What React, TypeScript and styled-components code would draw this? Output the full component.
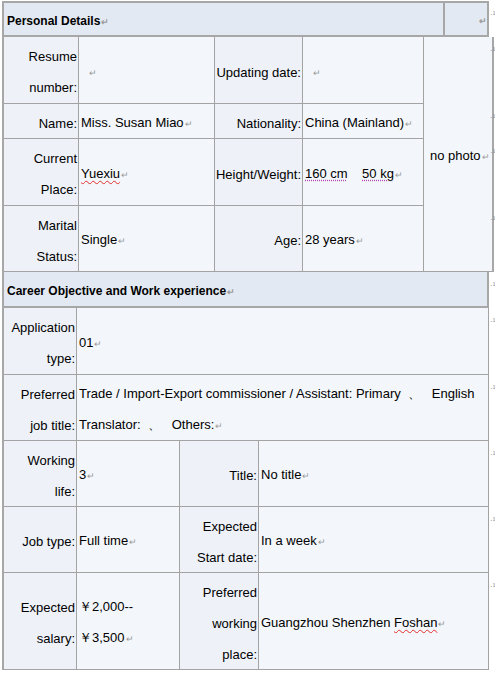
import React from "react";
import styled, { createGlobalStyle } from "styled-components";

const GlobalStyle = createGlobalStyle`
  html, body {
    margin: 0;
    padding: 0;
    background: #ffffff;
  }
  body {
    font-family: "Liberation Sans", Arial, sans-serif;
    font-size: 13px;
    color: #000;
  }
`;

const Page = styled.div`
  display: flex;
  padding: 1px 0 0 2px;
`;

const Table = styled.div`
  width: 487px;
  display: flex;
  flex-direction: column;
  border-left: 2px solid #a7a7a7;
  border-top: 2px solid #a7a7a7;
  box-sizing: border-box;
`;

const HeaderRow = styled.div<{ $cols: string; $h: number }>`
  display: grid;
  grid-template-columns: ${(p) => p.$cols};
  height: ${(p) => p.$h}px;
`;

const Section = styled.div<{ $cols: string; $rows: string }>`
  display: grid;
  grid-template-columns: ${(p) => p.$cols};
  grid-template-rows: ${(p) => p.$rows};
`;

const HeadCell = styled.div<{ $end?: boolean }>`
  display: flex;
  align-items: center;
  justify-content: ${(p) => (p.$end ? "flex-end" : "flex-start")};
  padding: 3px 0 0 3px;
  background: #e3e9f2;
  border-right: 2px solid #a7a7a7;
  border-bottom: 2px solid #a7a7a7;
  font-weight: bold;
  font-size: 12px;
  box-sizing: border-box;
  white-space: nowrap;
`;

const Cell = styled.div<{ $label?: boolean; $span?: number }>`
  display: flex;
  align-items: center;
  justify-content: ${(p) => (p.$label ? "flex-end" : "flex-start")};
  text-align: ${(p) => (p.$label ? "right" : "left")};
  padding: ${(p) => (p.$label ? "4px 1px 0 2px" : "4px 2px 0 2px")};
  line-height: 31px;
  background: ${(p) => (p.$label ? "#eef2f8" : "#f3f6fa")};
  border-right: 1px solid #a3a3a3;
  border-bottom: 1px solid #a3a3a3;
  box-sizing: border-box;
  white-space: nowrap;
  ${(p) => (p.$span ? `grid-column: span ${p.$span};` : "")}
`;

const PhotoCell = styled(Cell)`
  grid-column: 5;
  grid-row: 1 / span 4;
  padding-left: 6px;
  border-right: 2px solid #a7a7a7;
`;

const Text = styled.span`
  display: block;
`;

const Mark = styled.span`
  color: #9a9a9a;
  font-size: 9px;
  margin-left: 1px;
`;

const Wavy = styled.span`
  text-decoration: underline wavy #e03030;
  text-decoration-thickness: 1px;
  text-underline-offset: 2px;
`;

const Dotted = styled.span`
  text-decoration: underline dotted #b040b0;
  text-underline-offset: 2px;
`;

const Markers = styled.div`
  width: 6px;
  display: grid;
  grid-template-rows: 36px 67px 35px 67px 66px 36px 67px 66px 66px 66px 97px;
`;

const RowMark = styled.div`
  color: #8a8a8a;
  font-size: 8px;
  line-height: 8px;
  padding: 10px 0 0 1px;
  white-space: nowrap;
`;

const P = () => <Mark>↵</Mark>;

type CellProps = { label?: boolean; span?: number; children: React.ReactNode };

const C: React.FC<CellProps> = ({ label, span, children }) => (
  <Cell $label={label} $span={span}>
    <Text>{children}</Text>
  </Cell>
);

const App: React.FC = () => {
  return (
    <>
      <GlobalStyle />
      <Page>
        <Table>
          <HeaderRow $cols="441px 1fr" $h={34}>
            <HeadCell>
              <Text>
                Personal Details<P />
              </Text>
            </HeadCell>
            <HeadCell $end>
              <Mark>↵</Mark>
            </HeadCell>
          </HeaderRow>

          <Section $cols="75px 136px 88px 121px 1fr" $rows="67px 35px 67px 66px">
            <C label>
              Resume
              <br />
              number:
            </C>
            <C>
              &nbsp;&nbsp;<P />
            </C>
            <C label>Updating date:</C>
            <C>
              &nbsp;&nbsp;<P />
            </C>
            <PhotoCell>
              <Text>
                no photo<P />
              </Text>
            </PhotoCell>

            <C label>Name:</C>
            <C>
              Miss. Susan Miao<P />
            </C>
            <C label>Nationality:</C>
            <C>
              China (Mainland)<P />
            </C>

            <C label>
              Current
              <br />
              Place:
            </C>
            <C>
              <Wavy>Yuexiu</Wavy>
              <P />
            </C>
            <C label>Height/Weight:</C>
            <C>
              <Dotted>160 cm</Dotted>&nbsp;&nbsp;&nbsp;&nbsp;<Dotted>50 kg</Dotted>
              <P />
            </C>

            <C label>
              Marital
              <br />
              Status:
            </C>
            <C>
              Single<P />
            </C>
            <C label>Age:</C>
            <C>
              28 years<P />
            </C>
          </Section>

          <HeaderRow $cols="1fr" $h={36}>
            <HeadCell>
              <Text>
                Career Objective and Work experience<P />
              </Text>
            </HeadCell>
          </HeaderRow>

          <Section $cols="73px 103px 79px 1fr" $rows="67px 66px 66px 66px 97px">
            <C label>
              Application
              <br />
              type:
            </C>
            <C span={3}>
              01<P />
            </C>

            <C label>
              Preferred
              <br />
              job title:
            </C>
            <C span={3}>
              Trade / Import-Export commissioner / Assistant: Primary &nbsp;、&nbsp;&nbsp; English
              <br />
              Translator: &nbsp;、 &nbsp; Others:
              <P />
            </C>

            <C label>
              Working
              <br />
              life:
            </C>
            <C>
              3<P />
            </C>
            <C label>Title:</C>
            <C>
              No title<P />
            </C>

            <C label>Job type:</C>
            <C>
              Full time<P />
            </C>
            <C label>
              Expected
              <br />
              Start date:
            </C>
            <C>
              In a week<P />
            </C>

            <C label>
              Expected
              <br />
              salary:
            </C>
            <C>
              ￥2,000--
              <br />
              ￥3,500
              <P />
            </C>
            <C label>
              Preferred
              <br />
              working
              <br />
              place:
            </C>
            <C>
              Guangzhou Shenzhen <Wavy>Foshan</Wavy>
              <P />
            </C>
          </Section>
        </Table>

        <Markers>
          {Array.from({ length: 11 }).map((_, i) => (
            <RowMark key={i}>·¹</RowMark>
          ))}
        </Markers>
      </Page>
    </>
  );
};

export default App;
